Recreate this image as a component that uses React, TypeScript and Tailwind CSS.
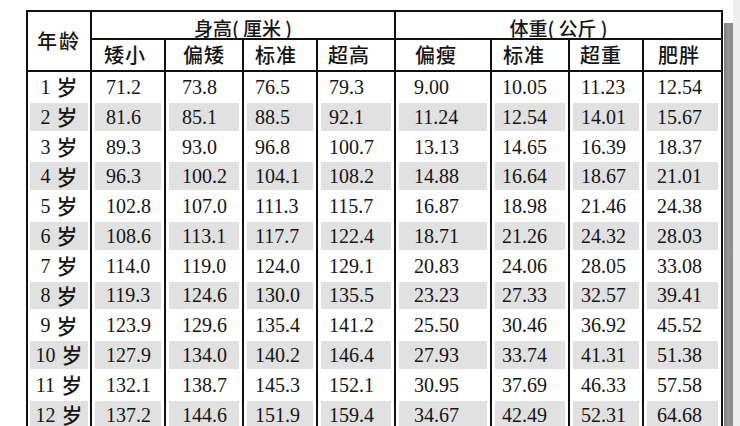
import React from "react";

const rows: [string, string[]][] = [
  ["1", ["71.2", "73.8", "76.5", "79.3", "9.00", "10.05", "11.23", "12.54"]],
  ["2", ["81.6", "85.1", "88.5", "92.1", "11.24", "12.54", "14.01", "15.67"]],
  ["3", ["89.3", "93.0", "96.8", "100.7", "13.13", "14.65", "16.39", "18.37"]],
  ["4", ["96.3", "100.2", "104.1", "108.2", "14.88", "16.64", "18.67", "21.01"]],
  ["5", ["102.8", "107.0", "111.3", "115.7", "16.87", "18.98", "21.46", "24.38"]],
  ["6", ["108.6", "113.1", "117.7", "122.4", "18.71", "21.26", "24.32", "28.03"]],
  ["7", ["114.0", "119.0", "124.0", "129.1", "20.83", "24.06", "28.05", "33.08"]],
  ["8", ["119.3", "124.6", "130.0", "135.5", "23.23", "27.33", "32.57", "39.41"]],
  ["9", ["123.9", "129.6", "135.4", "141.2", "25.50", "30.46", "36.92", "45.52"]],
  ["10", ["127.9", "134.0", "140.2", "146.4", "27.93", "33.74", "41.31", "51.38"]],
  ["11", ["132.1", "138.7", "145.3", "152.1", "30.95", "37.69", "46.33", "57.58"]],
  ["12", ["137.2", "144.6", "151.9", "159.4", "34.67", "42.49", "52.31", "64.68"]],
];

const heads = ["矮小", "偏矮", "标准", "超高", "偏瘦", "标准", "超重", "肥胖"];
const headPad = ["pl-[12px]", "pl-[17px]", "pl-[11px]", "pl-[10px]", "pl-[19px]", "pl-[11px]", "pl-[10px]", "pl-[14px]"];
const numPad = ["pl-[11px]", "pl-[13px]", "pl-[8px]", "pl-[8px]", "pl-[15px]", "pl-[7px]", "pl-[8px]", "pl-[10px]"];

export default function App() {
  return (
    <div className="w-[740px] h-[426px] bg-white overflow-hidden flex text-[#151515]">
      <div className="pl-[26px] pt-[10px]">
        <div className="grid grid-cols-[62px_74px_78px_74px_78px_96px_78px_74px_79px] grid-rows-[26px_34px_repeat(12,29.8px)] border-2 border-[#111] w-[697px]">
          <div className="row-span-2 border-b-2 border-[#111] flex items-center justify-center text-[20px] tracking-[2px] font-medium font-['Noto_Sans_CJK_SC',sans-serif]">
            年龄
          </div>
          <div className="col-span-4 border-l-2 border-[#111] flex items-end justify-center pb-[1px] text-[19px] leading-none font-medium font-['Noto_Sans_CJK_SC',sans-serif]">
            身高( 厘米 )
          </div>
          <div className="col-span-4 border-l-2 border-[#111] flex items-end justify-center pb-[1px] text-[19px] leading-none font-medium font-['Noto_Sans_CJK_SC',sans-serif]">
            体重( 公斤 )
          </div>
          {heads.map((h, i) => (
            <div
              key={"h" + i}
              className={`border-l-2 border-t-2 border-b-2 border-[#111] flex items-center ${headPad[i]} text-[20px] tracking-[1px] font-medium font-['Noto_Sans_CJK_SC',sans-serif]`}
            >
              {h}
            </div>
          ))}
          {rows.map(([age, vals], r) => {
            const shade = r % 2 === 1;
            return (
              <React.Fragment key={age}>
                <div className="flex px-[2px] py-[1px]">
                  <div className={`flex-1 flex items-center justify-center ${shade ? "bg-[#e1e1e1]" : ""}`}>
                    <span className="text-[20px] font-['Liberation_Serif','DejaVu_Serif',serif]">{age}</span>
                    <span className="text-[21px] ml-[6px] font-medium font-['Noto_Sans_CJK_SC',sans-serif]">岁</span>
                  </div>
                </div>
                {vals.map((v, i) => (
                  <div key={i} className="border-l-2 border-[#111] flex px-[3px] py-[1px]">
                    <div
                      className={`flex-1 flex items-center ${numPad[i]} text-[20px] font-['Liberation_Serif','DejaVu_Serif',serif] ${shade ? "bg-[#e1e1e1]" : ""}`}
                    >
                      {v}
                    </div>
                  </div>
                ))}
              </React.Fragment>
            );
          })}
        </div>
      </div>
      <div className="ml-[1px] mt-[23px] w-[9px] h-[403px] bg-gradient-to-r from-[#7d7d7d] via-[#959595] to-[#8a8a8a]" />
      <div className="flex-1 bg-[#eeeeee]" />
    </div>
  );
}
